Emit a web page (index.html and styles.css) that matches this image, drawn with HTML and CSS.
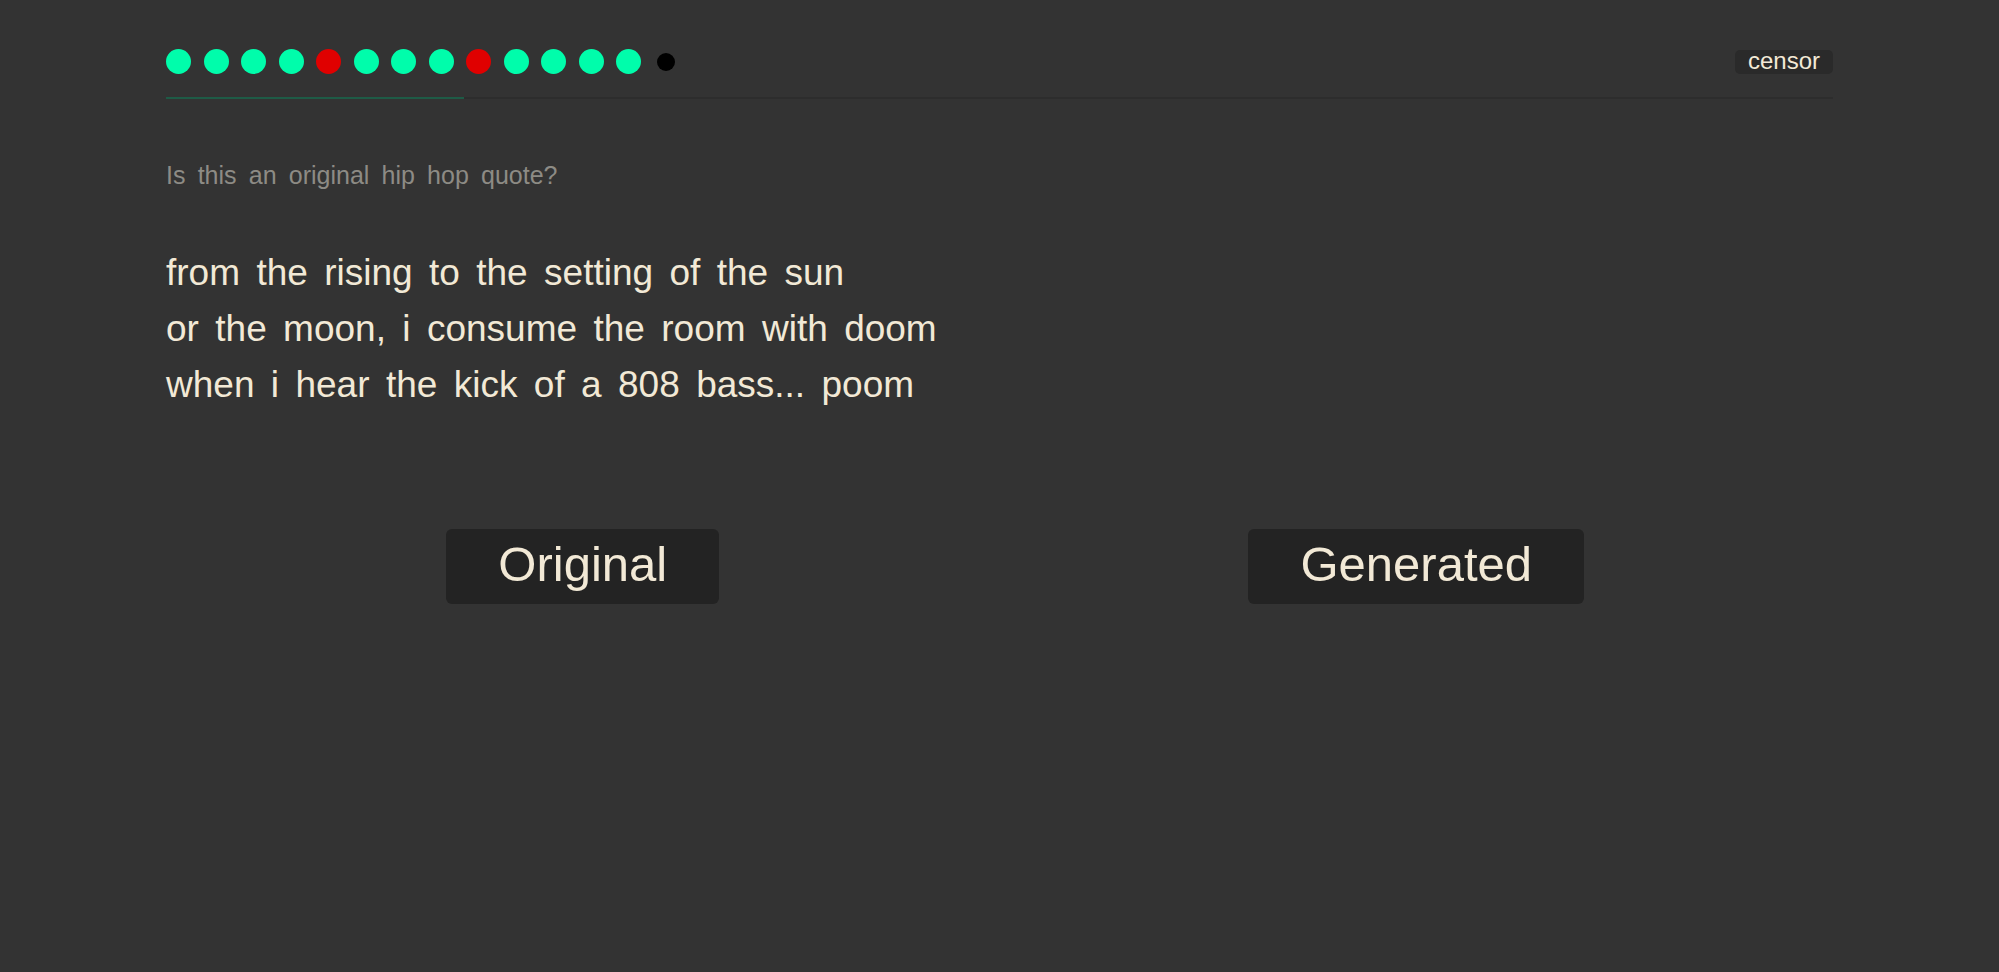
FILE: index.html
```html
<!DOCTYPE html>
<html lang="en">
<head>
<meta charset="utf-8">
<title>Hip hop quote quiz</title>
<link rel="stylesheet" href="styles.css">
</head>
<body>
<main class="page">
  <header class="topbar">
    <div class="dots">
      <span class="dot right"></span>
      <span class="dot right"></span>
      <span class="dot right"></span>
      <span class="dot right"></span>
      <span class="dot wrong"></span>
      <span class="dot right"></span>
      <span class="dot right"></span>
      <span class="dot right"></span>
      <span class="dot wrong"></span>
      <span class="dot right"></span>
      <span class="dot right"></span>
      <span class="dot right"></span>
      <span class="dot right"></span>
      <span class="dot current"></span>
    </div>
    <button class="censor" type="button">censor</button>
  </header>
  <div class="progress"><div class="progress-fill" style="width:17.9%"></div></div>

  <p class="question">Is this an original hip hop quote?</p>

  <blockquote class="lyrics">
    <p>from the rising to the setting of the sun</p>
    <p>or the moon, i consume the room with doom</p>
    <p>when i hear the kick of a 808 bass... poom</p>
  </blockquote>

  <div class="choices">
    <div class="choice-cell"><button class="choice" type="button">Original</button></div>
    <div class="choice-cell"><button class="choice" type="button">Generated</button></div>
  </div>
</main>
</body>
</html>
```

FILE: styles.css
```css
html, body {
  margin: 0;
  padding: 0;
  background: #333333;
  height: 100%;
}

body {
  font-family: "Liberation Sans", Arial, Helvetica, sans-serif;
  color: #f2e9d6;
}

.page {
  width: 1667px;
  margin: 0 auto;
  padding-top: 49px;
}

.topbar {
  display: flex;
  justify-content: space-between;
  align-items: center;
  height: 25px;
}

.dots {
  display: flex;
  align-items: center;
  gap: 12.5px;
}

.dot {
  width: 25px;
  height: 25px;
  display: flex;
  align-items: center;
  justify-content: center;
}

.dot::before {
  content: "";
  display: block;
  width: 25px;
  height: 25px;
  border-radius: 50%;
}

.dot.right::before { background: #00fdab; }
.dot.wrong::before { background: #e00000; }
.dot.current::before {
  width: 18px;
  height: 18px;
  background: #000000;
}

.censor {
  font-family: "Liberation Sans", Arial, Helvetica, sans-serif;
  font-size: 24px;
  line-height: 22px;
  height: 24px;
  padding: 0 13px 2px;
  border: 0;
  border-radius: 5px;
  background: #2a2a2a;
  color: #f2e9d6;
}

.progress {
  margin-top: 23px;
  height: 2px;
  background: #2d2d2d;
}

.progress-fill {
  height: 100%;
  background: #1e5b46;
}

.question {
  margin: 57px 0 0;
  font-size: 25px;
  line-height: 38px;
  word-spacing: 0.21em;
  color: #8d8b85;
}

.lyrics {
  margin: 51px 0 0;
  font-size: 37px;
  line-height: 56px;
  word-spacing: 0.165em;
}

.lyrics p {
  margin: 0;
}

.choices {
  display: grid;
  grid-template-columns: 1fr 1fr;
  margin-top: 116px;
}

.choice-cell {
  display: flex;
  justify-content: center;
}

.choice {
  font-family: "Liberation Sans", Arial, Helvetica, sans-serif;
  font-size: 49px;
  line-height: 58px;
  padding: 6px 52px 11px;
  border: 0;
  border-radius: 6px;
  background: #232323;
  color: #f2e9d6;
}
```
